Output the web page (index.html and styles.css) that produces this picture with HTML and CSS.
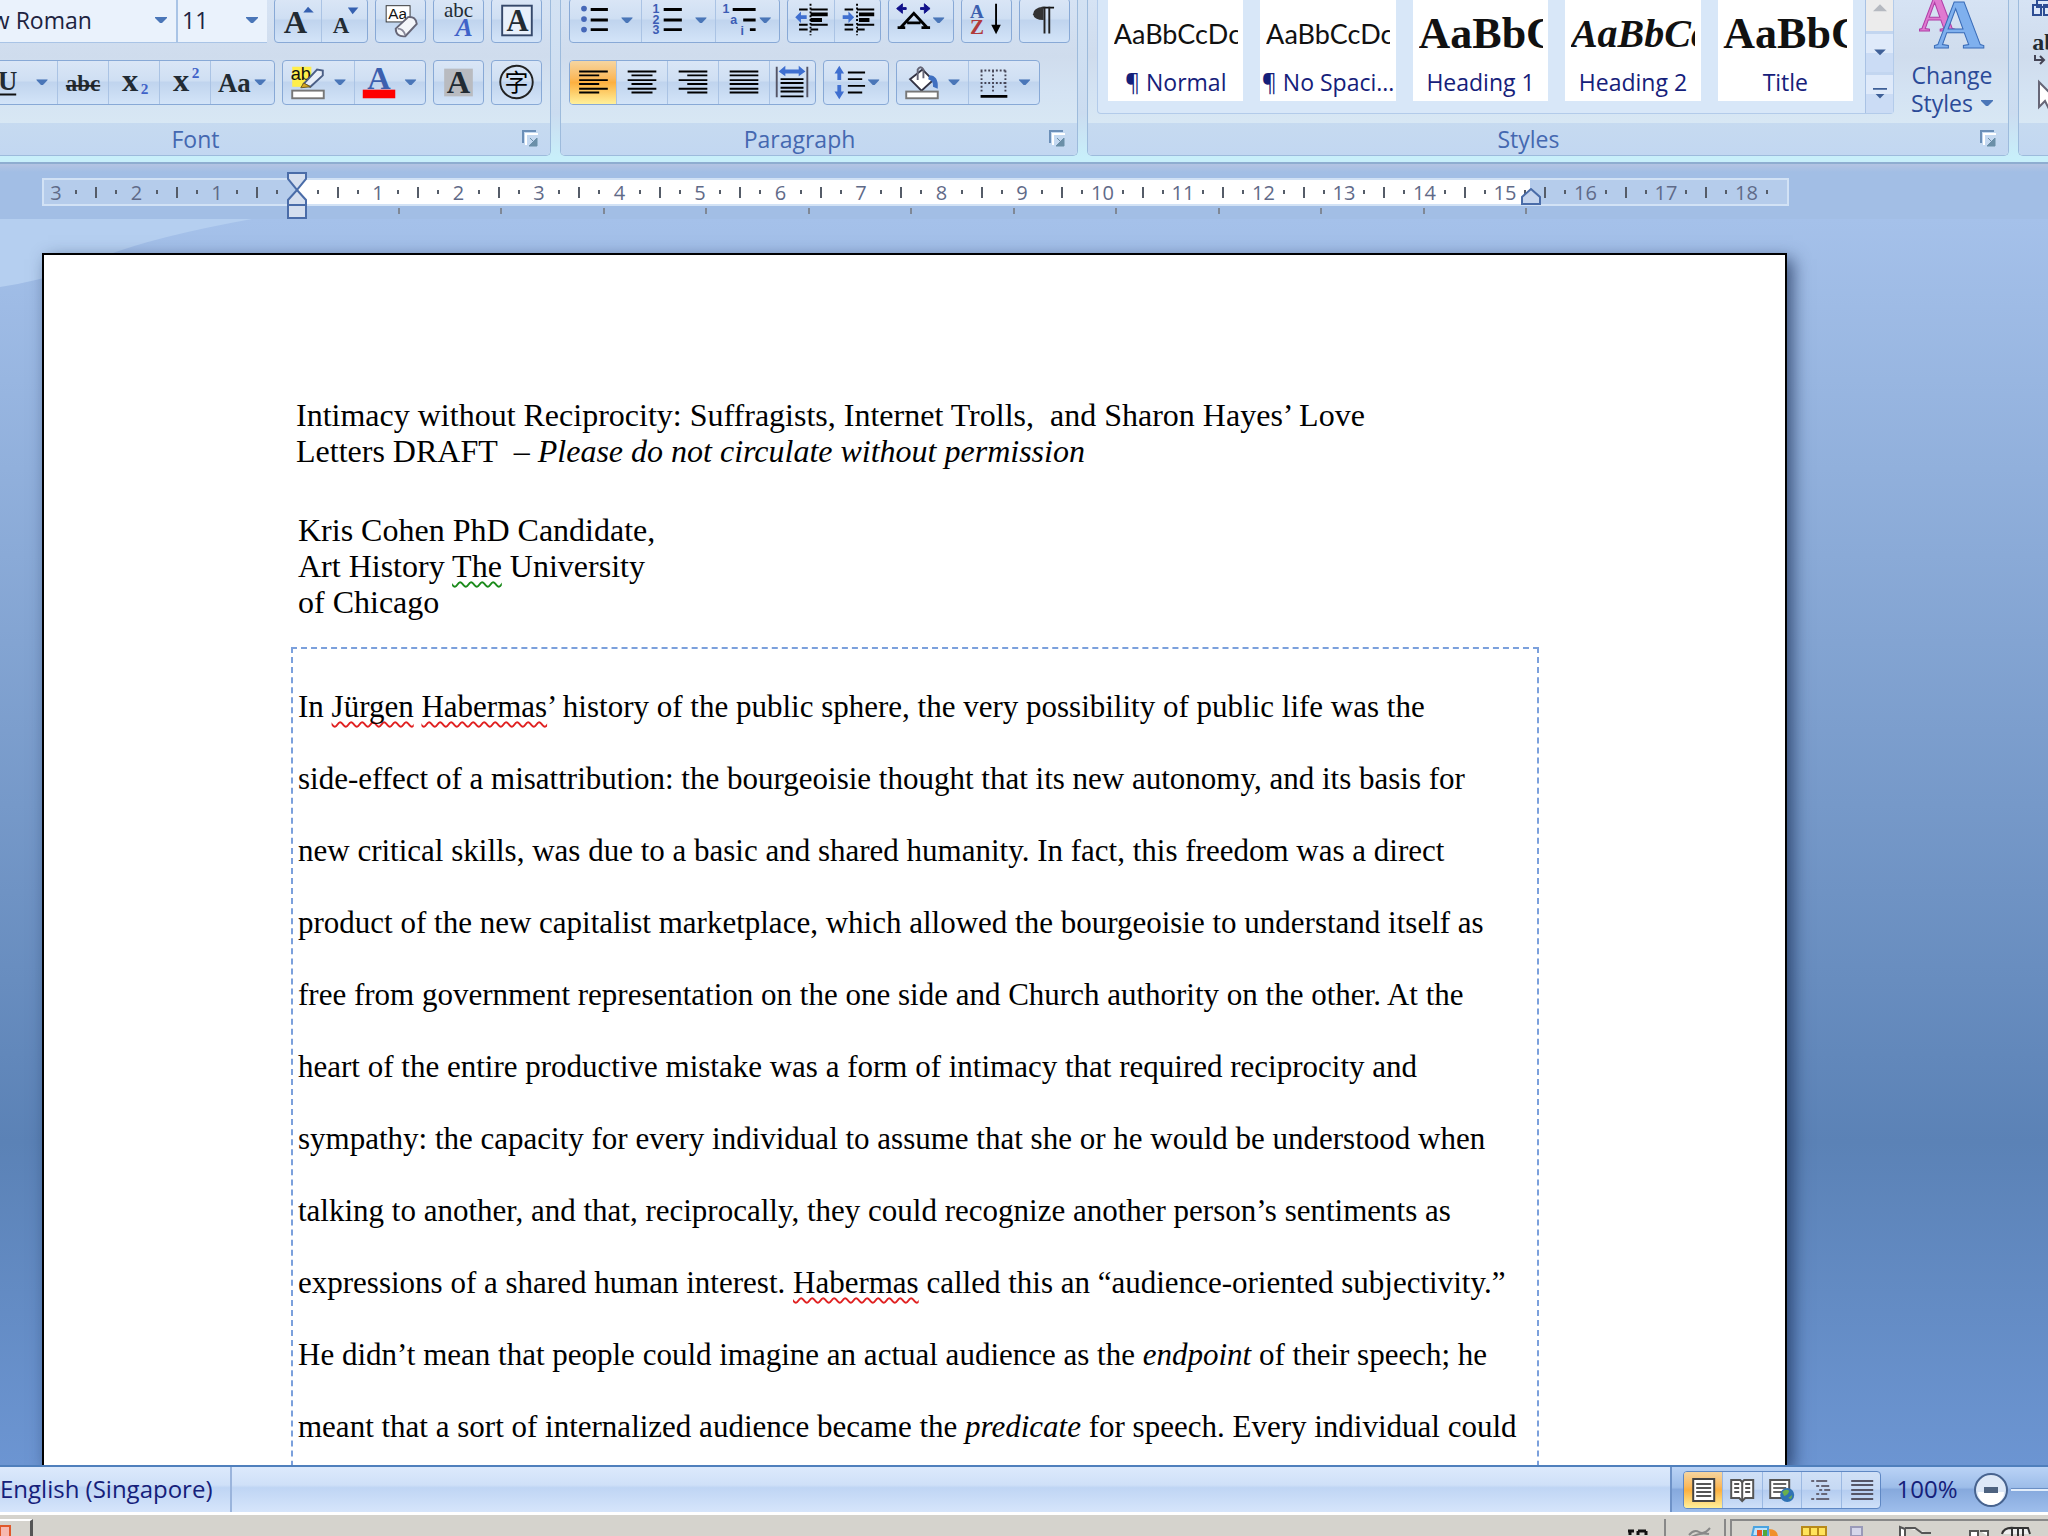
FILE: index.html
```
<!DOCTYPE html>
<html lang="en">
<head>
    <meta charset="UTF-8">
    <meta name="viewport" content="width=device-width, initial-scale=1.0">
    <title>Document - Microsoft Word</title>
    <link rel="stylesheet" href="styles.css">
</head>

<body>

    <svg class="defs" aria-hidden="true">
        <defs>
            <symbol id="arrow" viewBox="0 0 12 7"><path d="M0 0H12V1L7 6H5L0 1Z" fill="#4a76b8"/></symbol>
            <symbol id="launcher" viewBox="0 0 18 18">
                <path d="M2 13V2H14" fill="none" stroke="#fff" stroke-width="2" transform="translate(2 2)"/>
                <path d="M1 13V1H14" fill="none" stroke="#6b8fb8" stroke-width="2"/>
                <path d="M8 8l5 5M15 8v8H7z" fill="#6b8fa8" stroke="#6b8fa8"/>
            </symbol>
        </defs>
    </svg>

    <header class="ribbon">
        <section class="group font-group">
            <div class="tools">
                <div class="row">
                    <div class="combos">
                        <span class="combo combo-name">
                            <select aria-label="Font"><option>Times New Roman</option></select>
                            <svg class="arrow"><use href="#arrow"/></svg>
                        </span>
                        <span class="combo combo-size">
                            <select aria-label="Font size"><option>11</option></select>
                            <svg class="arrow"><use href="#arrow"/></svg>
                        </span>
                    </div>
                    <div class="btns">
                        <button class="w46" aria-label="Grow font"><svg viewBox="0 0 47 45"><text class="serif" x="21" y="36" font-size="34">A</text><path d="M29 14L34 8L40 14Z" fill="#3560b0"/></svg></button>
                        <button class="w46" aria-label="Shrink font"><svg viewBox="0 0 47 45"><text class="serif" x="20" y="36" font-size="24">A</text><path d="M27 9H38L32 16Z" fill="#3560b0"/></svg></button>
                    </div>
                    <div class="btns">
                        <button class="w49" aria-label="Clear formatting"><svg viewBox="0 0 50 45"><rect x="10" y="7" width="25" height="17" fill="#fff" stroke="#333"/><text class="sans" x="22" y="21" font-size="16">Aa</text><path d="M20 31L33 19Q41 18 42 26L30 39Q20 40 20 31Z" fill="#f4f6fa" stroke="#667" stroke-width="2"/><path d="M22 31Q28 31 30 38" fill="none" stroke="#889" stroke-width="2"/></svg></button>
                    </div>
                    <div class="btns">
                        <button class="w49" aria-label="Phonetic guide"><svg viewBox="0 0 50 45"><text class="thin" x="25" y="19" font-size="22">abc</text><text class="serif blue ital" x="31" y="39" font-size="27">A</text></svg></button>
                    </div>
                    <div class="btns">
                        <button class="w49" aria-label="Character border"><svg viewBox="0 0 50 45"><rect x="10" y="7" width="31" height="31" fill="#e8f0fb" stroke="#35486a" stroke-width="2"/><text class="serif" x="26" y="33" font-size="32">A</text></svg></button>
                    </div>
                </div>
                <div class="row">
                    <div class="btns">
                        <button class="w49" aria-label="Bold"><svg viewBox="0 0 50 45"><text class="serif" x="25" y="32" font-size="28">B</text></svg></button>
                        <button class="w49" aria-label="Italic"><svg viewBox="0 0 50 45"><text class="serif ital" x="25" y="32" font-size="28">I</text></svg></button>
                        <button class="w74" aria-label="Underline"><svg viewBox="0 0 75 45"><text class="serif" x="24" y="30" font-size="28">U</text><path d="M14 35H33" stroke="#111" stroke-width="2"/><use href="#arrow" x="54" y="19" width="12" height="7"/></svg></button>
                        <button class="w51" aria-label="Strikethrough"><svg viewBox="0 0 50 45"><text class="serif" x="25" y="31" font-size="24">abc</text><path d="M7 26H43" stroke="#222" stroke-width="2"/></svg></button>
                        <button class="w51" aria-label="Subscript"><svg viewBox="0 0 50 45"><text class="serif" x="21" y="31" font-size="34">x</text><text class="serif blue" x="36" y="35" font-size="16">2</text></svg></button>
                        <button class="w51" aria-label="Superscript"><svg viewBox="0 0 50 45"><text class="serif" x="21" y="31" font-size="34">x</text><text class="serif blue" x="36" y="18" font-size="16">2</text></svg></button>
                        <button class="w64" aria-label="Change case"><svg viewBox="0 0 65 45"><text class="serif" x="24" y="32" font-size="28">Aa</text><use href="#arrow" x="45" y="19" width="12" height="7"/></svg></button>
                    </div>
                    <div class="btns">
                        <button class="w71" aria-label="Highlight"><svg viewBox="0 0 71 45"><rect x="8" y="6" width="20" height="21" fill="#ffee4a"/><text class="sans" x="17" y="20" font-size="19">ab</text><path d="M20 24L34 9L40 10L40 15L27 27Z" fill="#e8eef8" stroke="#4b5f86" stroke-width="2"/><path d="M17 28L20 23L27 27Z" fill="#d8a820" stroke="#6b5a20"/><rect x="8" y="31" width="33" height="8" fill="#fff" stroke="#777" stroke-width="2"/><use href="#arrow" x="52" y="19" width="12" height="7"/></svg></button>
                        <button class="w71" aria-label="Font color"><svg viewBox="0 0 71 45"><text class="serif navy" x="24" y="29" font-size="34">A</text><rect x="7" y="30" width="34" height="9" fill="#f00"/><use href="#arrow" x="51" y="19" width="12" height="7"/></svg></button>
                    </div>
                    <div class="btns">
                        <button class="w49" aria-label="Character shading"><svg viewBox="0 0 50 45"><rect x="10" y="8" width="30" height="29" fill="#b9bbc0"/><text class="serif" x="25" y="33" font-size="34">A</text></svg></button>
                    </div>
                    <div class="btns">
                        <button class="w49" aria-label="Enclose characters"><svg viewBox="0 0 50 45"><circle cx="25" cy="22" r="17" fill="none" stroke="#222" stroke-width="2"/><text class="cjk" x="25" y="31" font-size="25">字</text></svg></button>
                    </div>
                </div>
            </div>
            <div class="caption"><span>Font</span><button aria-label="Font settings"><svg><use href="#launcher"/></svg></button></div>
        </section>

        <section class="group para-group">
            <div class="tools">
                <div class="row">
                    <div class="btns">
                        <button class="w71" aria-label="Bullets"><svg viewBox="0 0 71 45"><g fill="#4668b8"><circle cx="13" cy="10" r="3"/><circle cx="13" cy="21" r="3"/><circle cx="13" cy="32" r="3"/></g><path d="M20 11H38M20 22H38M20 32H38" stroke="#000" stroke-width="3"/><use href="#arrow" x="52" y="19" width="12" height="7"/></svg></button>
                        <button class="w74" aria-label="Numbering"><svg viewBox="0 0 75 45"><g class="nums"><text x="14" y="15">1</text><text x="14" y="26">2</text><text x="14" y="37">3</text></g><path d="M22 11H41M22 22H41M22 32H41" stroke="#000" stroke-width="3"/><use href="#arrow" x="55" y="19" width="12" height="7"/></svg></button>
                        <button class="w64" aria-label="Multilevel list"><svg viewBox="0 0 65 45"><g class="nums"><text x="10" y="15">1</text><text x="18" y="26">a</text><text x="27" y="38">i</text></g><path d="M17 11H41M28 22H41M35 32H41" stroke="#000" stroke-width="3"/><use href="#arrow" x="45" y="19" width="12" height="7"/></svg></button>
                    </div>
                    <div class="btns">
                        <button class="w46" aria-label="Decrease indent"><svg viewBox="0 0 47 45"><path d="M11 11H20M23 11H41M23 27H41M11 32H20M23 32H31M11 27H20" stroke="#000" stroke-width="2"/><path d="M23 16H41M23 22H35" stroke="#000" stroke-width="4"/><path d="M23 5V38" stroke="#000" stroke-width="2" stroke-dasharray="2 2"/><path d="M7 19L13 13V17H19V21H13V25Z" fill="#3f6fd0"/></svg></button>
                        <button class="w46" aria-label="Increase indent"><svg viewBox="0 0 47 45"><path d="M10 11H19M23 11H41M23 27H41M10 32H19M23 32H31M10 27H19" stroke="#000" stroke-width="2"/><path d="M25 16H41M25 22H36" stroke="#000" stroke-width="4"/><path d="M23 5V38" stroke="#000" stroke-width="2" stroke-dasharray="2 2"/><path d="M20 19L14 13V17H8V21H14V25Z" fill="#3f6fd0"/></svg></button>
                    </div>
                    <div class="btns">
                        <button class="w64" aria-label="Asian layout"><svg viewBox="0 0 65 45"><path d="M8 30H16M33 30H42M11 30L25 15L39 30M18 25H32" fill="none" stroke="#000" stroke-width="3"/><path d="M7 10L13 5V9H17V11H13V15ZM42 10L36 5V9H32V11H36V15Z" fill="#11118a" stroke="#11118a"/><use href="#arrow" x="45" y="19" width="12" height="7"/></svg></button>
                    </div>
                    <div class="btns">
                        <button class="w49" aria-label="Sort"><svg viewBox="0 0 50 45"><text class="serif navy" x="15" y="20" font-size="20">A</text><text class="serif red" x="15" y="37" font-size="22">Z</text><path d="M35 5V30" stroke="#000" stroke-width="2"/><path d="M30 27H40L35 37Z"/></svg></button>
                    </div>
                    <div class="btns">
                        <button class="w49" aria-label="Show marks"><svg viewBox="0 0 50 45"><path d="M22 9H35" stroke="#111" stroke-width="2"/><path d="M24 8Q13 9 13 16Q14 22 24 22Z" fill="#333"/><path d="M25 8V36M30 8V36" stroke="#222" stroke-width="2"/></svg></button>
                    </div>
                </div>
                <div class="row">
                    <div class="btns">
                        <button class="w46 active" aria-label="Align left"><svg viewBox="0 0 47 45"><path d="M9 11H39M9 15H30M9 20H39M9 24H30M9 29H39M9 33H30" stroke="#000" stroke-width="2"/></svg></button>
                        <button class="w51" aria-label="Center"><svg viewBox="0 0 50 45"><path d="M10 11H40M14 15H36M10 20H40M14 24H36M10 29H40M14 33H36" stroke="#000" stroke-width="2"/></svg></button>
                        <button class="w51" aria-label="Align right"><svg viewBox="0 0 50 45"><path d="M10 11H40M19 15H40M10 20H40M19 24H40M10 29H40M19 33H40" stroke="#000" stroke-width="2"/></svg></button>
                        <button class="w51" aria-label="Justify"><svg viewBox="0 0 50 45"><path d="M10 11H40M10 15H40M10 20H40M10 24H40M10 29H40M10 33H40" stroke="#000" stroke-width="2"/></svg></button>
                        <button class="w46" aria-label="Distributed"><svg viewBox="0 0 47 45"><path d="M7 6V38M39 6V38" stroke="#556" stroke-width="2"/><path d="M11 19H35M11 23H35M11 28H35M11 32H35M11 37H35" stroke="#000" stroke-width="2"/><path d="M9 11L16 5V9H30V5L37 11L30 16V13H16V16Z" fill="#3f6fd0"/></svg></button>
                    </div>
                    <div class="btns">
                        <button class="w64" aria-label="Line spacing"><svg viewBox="0 0 65 45"><path d="M24 12H42M24 19H39M24 26H42M24 33H39" stroke="#000" stroke-width="2"/><path d="M15 5L20 13H17V20H13V13H10ZM15 40L20 32H17V25H13V32H10Z" fill="#3f6fd0"/><use href="#arrow" x="45" y="19" width="12" height="7"/></svg></button>
                    </div>
                    <div class="btns">
                        <button class="w71" aria-label="Shading"><svg viewBox="0 0 71 45"><path d="M12 19L25 9L36 20L24 31Z" fill="#fff" stroke="#334" stroke-width="2"/><path d="M20 20V9Q23 4 26 9V18" fill="none" stroke="#667" stroke-width="2"/><path d="M32 15Q42 15 41 29L36 27Q37 21 31 19Z" fill="#3f6fc0"/><rect x="8" y="32" width="33" height="7" fill="#fff" stroke="#777" stroke-width="2"/><use href="#arrow" x="52" y="19" width="12" height="7"/></svg></button>
                        <button class="w71" aria-label="Borders"><svg viewBox="0 0 71 45"><path d="M11 10H38M11 23H38M12 10V34M24 10V34M37 10V34" stroke="#445" stroke-width="2" stroke-dasharray="2 2"/><path d="M11 37H39" stroke="#000" stroke-width="3"/><use href="#arrow" x="51" y="19" width="12" height="7"/></svg></button>
                    </div>
                </div>
            </div>
            <div class="caption"><span>Paragraph</span><button aria-label="Paragraph settings"><svg><use href="#launcher"/></svg></button></div>
        </section>

        <section class="group styles-group">
            <div class="tools styles-tools">
                <div class="gallery">
                    <div class="tiles">
                        <button class="tile"><span class="sample">AaBbCcDc</span><span>¶ Normal</span></button>
                        <button class="tile"><span class="sample">AaBbCcDc</span><span>¶ No Spaci...</span></button>
                        <button class="tile"><span class="sample head">AaBbC</span><span>Heading 1</span></button>
                        <button class="tile"><span class="sample head head2">AaBbCc</span><span>Heading 2</span></button>
                        <button class="tile"><span class="sample head">AaBbC</span><span>Title</span></button>
                    </div>
                    <div class="scroller">
                        <button class="off" aria-label="Scroll up"><svg viewBox="0 0 12 12"><path d="M0 8L6 2L12 8Z" fill="#b5b9c0"/></svg></button>
                        <button aria-label="Scroll down"><svg viewBox="0 0 12 12"><path d="M1 3H11L6 8Z" fill="#3f6098"/></svg></button>
                        <button aria-label="More styles"><svg viewBox="0 0 16 14"><path d="M0 0H16V2H0ZM3 7H13L8 12Z" fill="#3f6098"/></svg></button>
                    </div>
                </div>
                <button class="change">
                    <svg class="change-icon" viewBox="0 0 66 62"><text class="big pink" x="18" y="38" font-size="50">A</text><text class="big sky" x="40" y="55" font-size="70">A</text></svg>
                    <span>Change</span>
                    <span>Styles <svg class="arrow"><use href="#arrow"/></svg></span>
                </button>
            </div>
            <div class="caption"><span>Styles</span><button aria-label="Styles settings"><svg><use href="#launcher"/></svg></button></div>
        </section>

        <section class="group edit-group">
            <div class="tools edit-tools">
                <svg viewBox="0 0 30 112"><path d="M18 0H30V7H18ZM14 5H22V15H14ZM25 5H30V15H25Z" fill="#dbe7fa" stroke="#2d4d94" stroke-width="2"/><text class="serif" x="26" y="50" font-size="24">ab</text><path d="M16 55V60H24M21 56L25 60L21 64" fill="none" stroke="#445" stroke-width="2"/><path d="M20 82V107L26 101L30 109V92Z" fill="#fff" stroke="#667" stroke-width="2"/></svg>
            </div>
            <div class="caption"></div>
        </section>
    </header>

    <div class="ruler-bar">
        <div class="ruler">
            <div class="inside"></div>
            <div class="marks" id="marks"></div>
            <svg class="indent" viewBox="0 0 20 47"><g fill="#d5dfef" stroke="#4a6ca8" stroke-width="2"><path d="M1 1H19V7L10 18L1 7Z"/><path d="M10 18L19 28V33H1V28Z"/><path d="M1 33H19V46H1Z"/></g></svg>
            <svg class="indent-right" viewBox="0 0 20 17"><path d="M10 1L19 9V16H1V9Z" fill="#c5d5ee" stroke="#4a6ca8" stroke-width="2"/></svg>
        </div>
        <div class="tabs" id="tabs"></div>
    </div>

    <main class="workspace">
        <svg class="swoosh" viewBox="0 0 260 70"><path d="M0 0H252Q130 22 80 48Q40 62 0 68Z" fill="#b5cff0"/></svg>
        <article class="page">
            <div class="title">
                <p>Intimacy without Reciprocity: Suffragists, Internet Trolls,&nbsp; and Sharon Hayes’ Love<br>
                Letters DRAFT&nbsp; – <em>Please do not circulate without permission</em></p>
                <p class="author">Kris Cohen PhD Candidate,<br>
                Art History <span class="grammar">The</span> University<br>
                of Chicago</p>
            </div>
            <div class="body-text">
                <p>In <span class="spell">Jürgen</span> <span class="spell">Habermas</span>’ history of the public sphere, the very possibility of public life was the<br>
                side-effect of a misattribution: the bourgeoisie thought that its new autonomy, and its basis for<br>
                new critical skills, was due to a basic and shared humanity. In fact, this freedom was a direct<br>
                product of the new capitalist marketplace, which allowed the bourgeoisie to understand itself as<br>
                free from government representation on the one side and Church authority on the other. At the<br>
                heart of the entire productive mistake was a form of intimacy that required reciprocity and<br>
                sympathy: the capacity for every individual to assume that she or he would be understood when<br>
                talking to another, and that, reciprocally, they could recognize another person’s sentiments as<br>
                expressions of a shared human interest. <span class="spell">Habermas</span> called this an “audience-oriented subjectivity.”<br>
                He didn’t mean that people could imagine an actual audience as the <em>endpoint</em> of their speech; he<br>
                meant that a sort of internalized audience became the <em>predicate</em> for speech. Every individual could</p>
            </div>
        </article>
    </main>

    <footer class="status">
        <button class="lang">English (Singapore)</button>
        <div class="status-right">
            <div class="views">
                <button class="active" aria-label="Print layout"><svg viewBox="0 0 38 36"><rect x="9" y="7" width="21" height="22" fill="#fff" stroke="#444" stroke-width="2"/><path d="M12 12H27M12 16H27M12 20H27M12 24H27" stroke="#555" stroke-width="2"/></svg></button>
                <button aria-label="Full screen reading"><svg viewBox="0 0 38 36"><path d="M8 8H17L19 10L21 8H30V26H22L19 29L16 26H8Z" fill="#fff" stroke="#555" stroke-width="2"/><path d="M11 12H16M11 16H16M11 20H16M22 12H27M22 16H27M22 20H27M19 10V29" stroke="#555" stroke-width="2"/></svg></button>
                <button aria-label="Web layout"><svg viewBox="0 0 38 36"><rect x="7" y="8" width="19" height="18" fill="#fff" stroke="#555" stroke-width="2"/><path d="M10 12H23M10 16H23M10 20H20" stroke="#666" stroke-width="2"/><circle cx="24" cy="23" r="7" fill="#2f72b4"/><path d="M19 20Q23 16 26 19Q25 23 21 24ZM25 26L29 23L28 27Z" fill="#6ab04c"/></svg></button>
                <button aria-label="Outline"><svg viewBox="0 0 38 36"><path d="M9 9H12M14 9H25M14 14H17M19 14H27M17 18H20M22 18H28M14 22H17M19 22H25M9 27H12M14 27H27" stroke="#667" stroke-width="2"/></svg></button>
                <button aria-label="Draft"><svg viewBox="0 0 38 36"><path d="M9 9H31M9 13H31M9 18H31M9 22H31M9 27H31" stroke="#556" stroke-width="2"/></svg></button>
            </div>
            <button class="percent">100%</button>
            <button class="zoom-out" aria-label="Zoom out"><svg viewBox="0 0 36 36"><circle cx="18" cy="18" r="16" fill="#dde8f7" stroke="#47638f" stroke-width="2"/><path d="M5 20H31A13 13 0 0 1 5 20Z" fill="#fff"/><rect x="11" y="15" width="14" height="6" fill="#4d627f"/></svg></button>
            <div class="zoom-track"></div>
        </div>
    </footer>

    <footer class="taskbar">
        <div class="task"><svg viewBox="0 0 30 18"><path d="M0 5H10V18H0Z" fill="#f6b8b0" stroke="#e0582a" stroke-width="2"/></svg></div>
        <div class="tray">
            <svg class="lang-icon" viewBox="0 0 24 8"><path d="M0 4H6M2 4V8M10 4H18M10 4V8M18 4V8" stroke="#111" stroke-width="3"/></svg>
            <div class="tray-mini"><svg viewBox="0 0 24 10"><path d="M1 8Q6 2 11 5T22 1M3 10Q12 5 21 7" fill="none" stroke="#888" stroke-width="2"/></svg></div>
            <div class="tray-icons">
                <svg viewBox="0 0 300 15"><path d="M20 15L22 6H36V15Z" fill="#bfe2fa" stroke="#4aa3e0" stroke-width="2"/><path d="M25 9H30V15H25Z" fill="#e8552a"/><path d="M31 9H35V15H31Z" fill="#54a838"/><path d="M37 8Q45 8 46 15H38Z" fill="#f0902a"/><path d="M70 6H94V15H70Z" fill="#ffe35a" stroke="#b88a1a" stroke-width="2"/><path d="M78 6V15M86 6V15" stroke="#b88a1a" stroke-width="2"/><path d="M119 6H130V15H119Z" fill="#d5d6ea" stroke="#9a9ab8" stroke-width="2"/><path d="M168 15V6L173 8V15M173 7L183 7L190 12H199" fill="#fff" stroke="#555" stroke-width="2"/><path d="M238 15V10H246V15M256 15V10H248" fill="#fff" stroke="#555" stroke-width="2"/><path d="M270 13Q272 6 282 7L296 7L298 13M280 8V15M286 8V15M291 8V15" fill="#eee" stroke="#333" stroke-width="2"/></svg>
            </div>
        </div>
    </footer>

    <script>
        // quarter-centimetre marks, from 3 cm left of the margin to 18.25 cm
        const marks = document.getElementById('marks');
        for (let q = -12; q <= 73; q++) {
            const mark = document.createElement('span');
            if (q % 4 === 0) {
                mark.textContent = q === 0 ? '' : Math.abs(q / 4);
            } else {
                mark.className = q % 2 === 0 ? 'half' : 'quarter';
            }
            marks.appendChild(mark);
        }

        // default tab stops under the ruler
        const tabs = document.getElementById('tabs');
        for (let i = 0; i < 12; i++) {
            tabs.appendChild(document.createElement('i'));
        }
    </script>

</body>
</html>
```
FILE: styles.css
```
* {
    margin: 0;
    padding: 0;
    box-sizing: border-box;
}

body {
    font-family: "Open Sans", "Noto Sans", sans-serif;
    font-size: 23px;
    color: #15207a;
    height: 100vh;
    display: flex;
    flex-direction: column;
    overflow: hidden;
    background-color: #d5d2ca;
}

button {
    font: inherit;
    color: inherit;
    background: none;
    border: none;
    cursor: pointer;
}

svg {
    display: block;
}

.defs {
    position: absolute;
    width: 0;
    height: 0;
}

.arrow {
    width: 12px;
    height: 7px;
}

/* Ribbon */
.ribbon {
    display: flex;
    gap: 9px;
    margin-left: -121px;
    padding-bottom: 6px;
    background: linear-gradient(#d3e2f3, #cbdcf0 70%, #c8effa 97%);
    border-bottom: 2px solid #8eadd0;
    flex: none;
}

.group {
    display: flex;
    flex-direction: column;
    border: 1px solid #9dbbdc;
    border-top: none;
    border-radius: 0 0 5px 5px;
    background: linear-gradient(#d6e3f4, #cfdced 36%, #d4e3f3 60%, #dcecf5);
    flex: none;
    overflow: hidden;
}

.font-group {
    width: 672px;
}

.para-group {
    width: 518px;
}

.styles-group {
    flex: 1;
}

.edit-group {
    width: 30px;
    border-right: none;
    border-radius: 0 0 0 5px;
}

.tools {
    height: 123px;
}

.row {
    display: flex;
    gap: 7px;
    margin: -2px 8px 19px;
}

.font-group .row {
    justify-content: flex-end;
}

.caption {
    display: flex;
    height: 32px;
    align-items: center;
    background: linear-gradient(#c6daf0, #c2d7f1);
    color: #4468b0;
}

.caption span {
    flex: 1;
    text-align: center;
}

.caption button {
    width: 39px;
    padding-left: 11px;
}

.caption svg {
    width: 18px;
    height: 18px;
}

.combos {
    display: flex;
    background-color: #a9c4e6;
    gap: 2px;
}

.combo {
    position: relative;
    display: flex;
    height: 45px;
    background-color: #eaf2fc;
    border-bottom: 1px solid #a9c4e6;
}

.combo select {
    width: 100%;
    font: inherit;
    color: #1d2340;
    padding-left: 4px;
    appearance: none;
    border: none;
    background: none;
}

.combo .arrow {
    position: absolute;
    right: 9px;
    top: 19px;
}

.combo-name {
    width: 288px;
}

.combo-size {
    width: 89px;
}

.btns {
    display: flex;
    flex: none;
    height: 45px;
    border: 1px solid #88a9d6;
    border-radius: 4px;
    background: linear-gradient(#dae6f6, #cfdff3 45%, #c0d4ee 50%, #d3e4f8);
    overflow: hidden;
}

.btns button + button {
    border-left: 1px solid #aac3e4;
}

.btns svg {
    width: 100%;
    height: 43px;
}

.w46 { width: 46px; }
.w49 { width: 49px; }
.w51 { width: 51px; }
.w64 { width: 64px; }
.w71 { width: 71px; }
.w74 { width: 74px; }

.active {
    background: linear-gradient(#f6d5a0, #fbb95c 40%, #fcb040 50%, #fff09a);
}

.serif,
.thin,
.big {
    font-family: "Liberation Serif", serif;
    font-weight: bold;
    text-anchor: middle;
    fill: #222b33;
}

.thin {
    font-weight: normal;
}

.sans,
.nums text {
    font-family: "Liberation Sans", sans-serif;
    text-anchor: middle;
    fill: #111;
}

.nums text {
    font-size: 13px;
    font-weight: bold;
    fill: #3c5cb4;
}

.cjk {
    font-family: "Noto Sans CJK SC", sans-serif;
    text-anchor: middle;
}

.ital { font-style: italic; }
.blue { fill: #3f62c8; }
.navy { fill: #3c5fae; }
.red { fill: #b03a3a; }
.pink { fill: #e07ad0; stroke: #b040a8; }
.sky { fill: #7fb0ee; stroke: #3a6cb8; }

/* Styles gallery */
.styles-tools {
    display: flex;
    padding: 0 9px;
    gap: 11px;
}

.gallery {
    display: flex;
    flex: 1;
    height: 114px;
    border: 1px solid #b3cbea;
    border-top: none;
    border-radius: 0 0 4px 4px;
    background-color: #d8e7f8;
}

.tiles {
    display: flex;
    flex: 1;
    gap: 17px;
    padding: 0 12px 12px 10px;
}

.tile {
    flex: 1;
    min-width: 0;
    display: flex;
    flex-direction: column;
    justify-content: flex-end;
    background-color: #fff;
    line-height: 30px;
    padding-bottom: 4px;
    white-space: nowrap;
    overflow: hidden;
}

.tile span {
    align-self: center;
}

.tile .sample {
    width: 124px;
    padding-bottom: 8px;
    overflow: hidden;
    text-align: left;
    font-family: Lato, sans-serif;
    font-size: 27px;
    line-height: 50px;
    color: #111;
}

.tile .head {
    font-family: "Liberation Serif", serif;
    font-weight: bold;
    font-size: 44px;
}

.tile .head2 {
    font-style: italic;
    font-size: 40px;
}

.scroller {
    display: flex;
    flex-direction: column;
    width: 28px;
    border-left: 1px solid #a9c2e4;
}

.scroller button {
    flex: 1;
    display: flex;
    justify-content: center;
    align-items: center;
    border-top: 3px solid #c3d6f0;
    background: linear-gradient(#dfeafa 50%, #cbdcf5 50%);
}

.scroller .off {
    flex: none;
    height: 31px;
    padding-bottom: 14px;
    border-top: none;
    background: #ececec;
}

.scroller svg {
    width: 14px;
    height: 14px;
}

.change {
    width: 94px;
    display: flex;
    flex-direction: column;
    align-items: center;
    line-height: 28px;
    color: #2a4a98;
}

.change span {
    display: flex;
    align-items: center;
    gap: 8px;
}

.change-icon {
    width: 66px;
    height: 62px;
    margin: -7px 0 6px;
}

.edit-tools svg {
    width: 30px;
    height: 112px;
}

/* Ruler */
.ruler-bar {
    flex: none;
    height: 55px;
    padding: 14px 259px 0 42px;
    background: linear-gradient(#b4c4e2, #a2bee5 8px);
}

.ruler {
    position: relative;
    height: 28px;
    padding: 0 257px 0 254px;
    border: 2px solid #d2e2f5;
    background-color: #b5cceb;
}

.inside {
    height: 100%;
    background-color: #fff;
}

.marks {
    position: absolute;
    top: 0;
    bottom: 0;
    left: 12px;
    right: 20px;
    display: flex;
    justify-content: space-between;
    align-items: center;
}

.marks span {
    width: 0;
    display: flex;
    justify-content: center;
    font-size: 20px;
    color: #5f6a88;
}

.marks .half::before,
.marks .quarter::before {
    content: "";
    flex: none;
    width: 2px;
    height: 11px;
    background-color: #555c68;
}

.marks .quarter::before {
    height: 4px;
}

.indent {
    position: absolute;
    left: 243px;
    top: -8px;
    width: 20px;
    height: 47px;
}

.indent-right {
    position: absolute;
    right: 246px;
    bottom: -1px;
    width: 20px;
    height: 17px;
}

.tabs {
    display: flex;
    justify-content: space-between;
    margin-right: 258px;
    padding: 2px 4px 0 356px;
}

.tabs i {
    width: 2px;
    height: 6px;
    background-color: #7f8896;
}

/* Document */
.workspace {
    position: relative;
    flex: 1;
    min-height: 0;
    display: flex;
    padding: 34px 261px 0 42px;
    overflow: hidden;
    background: linear-gradient(#a5c1ea, #5b82b6 74%, #6c95d2);
}

.swoosh {
    position: absolute;
    left: 0;
    top: 0;
    width: 260px;
    height: 70px;
}

.page {
    position: relative;
    flex: 1;
    min-width: 0;
    border: 2px solid #000;
    border-bottom: none;
    background-color: #fff;
    box-shadow: 6px 6px 16px rgba(20, 40, 80, 0.7);
    padding: 142px 246px 0 247px;
    font-family: "Liberation Serif", serif;
    font-size: 32px;
    line-height: 36px;
    color: #000;
    white-space: nowrap;
}

.title {
    padding-left: 5px;
}

.author {
    margin-top: 43px;
    padding-left: 2px;
}

.body-text {
    margin-top: 27px;
    padding: 22px 5px 0;
    font-size: 31px;
    line-height: 72px;
    height: 900px;
    border: 2px dashed #7ba0dc;
}

.spell,
.grammar {
    text-decoration: underline wavy #e02020 2px;
    text-decoration-skip-ink: none;
    text-underline-offset: 4px;
}

.grammar {
    text-decoration-color: #1a8a1a;
}

/* Status bar */
.status {
    flex: none;
    display: flex;
    height: 49px;
    font-size: 24px;
    border-top: 2px solid #4f7fbc;
    border-bottom: 2px solid #fff;
    background: linear-gradient(#dce9fc, #cfe0f8 40%, #bfd5f4 46%, #d6e5fb);
}

.lang {
    width: 232px;
    padding-bottom: 2px;
    text-align: left;
    border-right: 2px solid #9ab4dc;
}

.status-right {
    display: flex;
    align-items: center;
    width: 378px;
    margin-left: auto;
    padding-left: 11px;
    border-left: 2px solid #6f93c8;
    background: linear-gradient(#bad3f6, #9dbde9 45%, #86a9dd 50%, #9ebeec);
}

.views {
    display: flex;
    height: 38px;
    width: 198px;
    border: 1px solid #5f88c4;
    border-radius: 4px;
    background: linear-gradient(#d0e0f6, #c6d9f4 48%, #b4ccf0 50%, #cfe0f8);
    overflow: hidden;
}

.views button {
    flex: 1;
}

.views button + button {
    border-left: 1px solid #9ab8e2;
}

.views svg {
    width: 100%;
    height: 36px;
}

.percent {
    width: 92px;
    padding-bottom: 2px;
}

.zoom-out svg {
    width: 36px;
    height: 36px;
}

.zoom-track {
    flex: 1;
    height: 3px;
    background-color: #e2edfb;
    border-top: 1px solid #6b8fc4;
    margin-left: 2px;
}

/* Taskbar */
.taskbar {
    flex: none;
    display: flex;
    justify-content: space-between;
    height: 22px;
    padding-top: 4px;
    background-color: #d5d3cd;
    border-top: 1px solid #fff;
    overflow: hidden;
}

.task {
    width: 33px;
    border-top: 2px solid #fff;
    border-right: 3px solid #555;
}

.task svg {
    width: 30px;
    height: 18px;
}

.tray {
    display: flex;
}

.lang-icon {
    width: 24px;
    height: 8px;
    margin: 8px 12px 0 0;
}

.tray-mini {
    width: 62px;
    padding: 8px 0 0 22px;
    border-left: 2px solid #888;
    border-right: 2px solid #888;
}

.tray-mini svg {
    width: 24px;
    height: 10px;
}

.tray-icons {
    width: 318px;
    margin-left: 4px;
    border-top: 2px solid #888;
    border-left: 2px solid #888;
}

.tray-icons svg {
    width: 300px;
    height: 15px;
}
```
